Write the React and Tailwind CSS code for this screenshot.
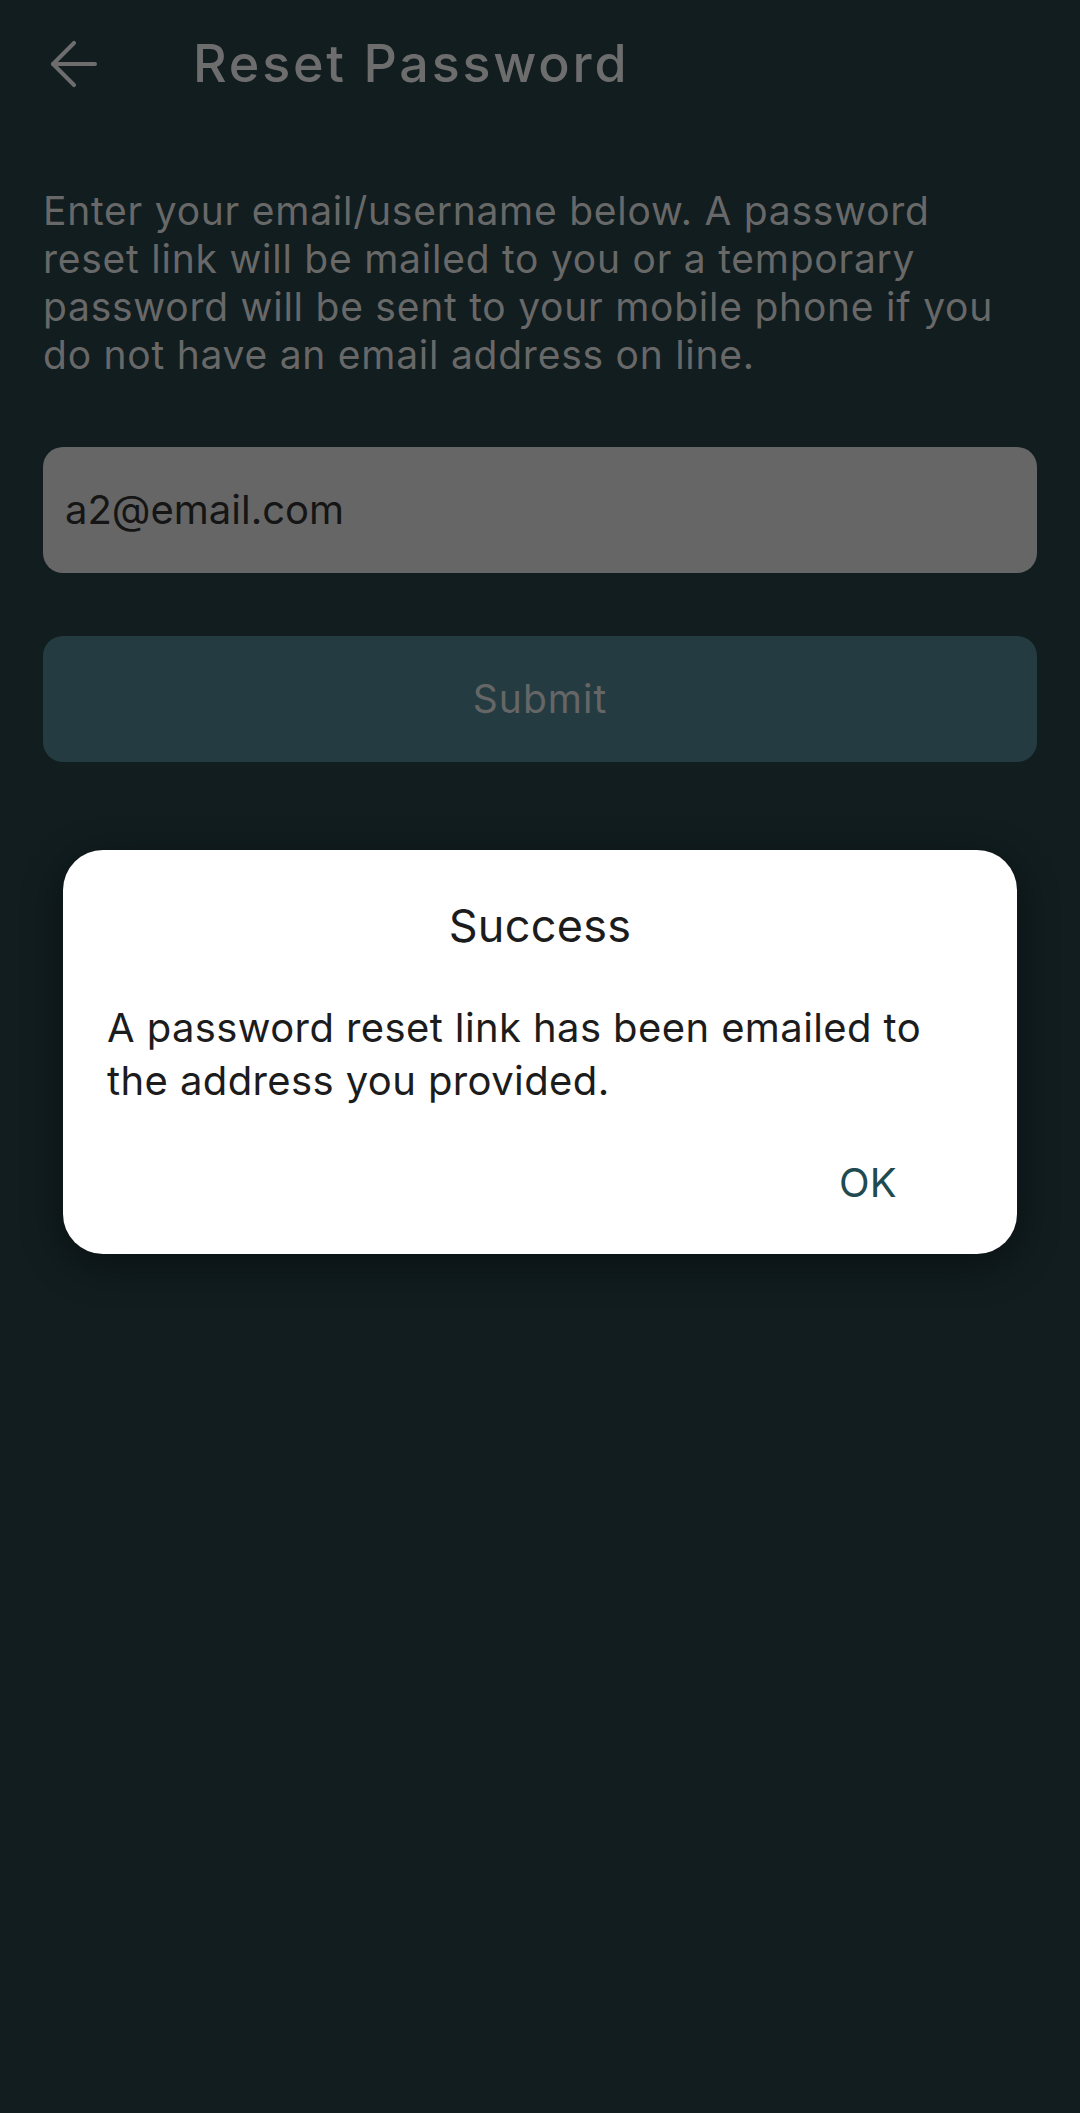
import { ArrowLeft } from 'lucide-react';

const font = { fontFamily: 'Inter, "Noto Sans", sans-serif' };

function SuccessDialog() {
  return (
    <div className="absolute left-[63px] top-[850px] w-[954px] h-[404px] bg-white rounded-[40px] shadow-[0_10px_40px_rgba(0,0,0,0.45)] flex flex-col">
      <h2 className="pt-[49px] text-center text-[45px] leading-[54px] text-[#1c1c1c] tracking-[0.3px]">Success</h2>
      <p className="mt-[48px] px-[44px] text-[40px] leading-[53px] text-[#1c1c1c] whitespace-nowrap tracking-[0.4px]">
        A password reset link has been emailed to<br />the address you provided.
      </p>
      <div className="mt-[52px] flex justify-end pr-[120px]">
        <button className="text-[40px] leading-[48px] text-[#1f4b50] tracking-[0.3px]">OK</button>
      </div>
    </div>
  );
}

export default function App() {
  return (
    <div className="relative min-h-[2113px] w-full bg-[#111d1f]" style={font}>
      {/* Header */}
      <div className="h-[128px] flex items-center pl-[38px]">
        <ArrowLeft className="w-[72px] h-[72px] text-[#6d6d6d]" strokeWidth={1.35} />
        <h1 className="ml-[83px] text-[52px] leading-none font-medium text-[#6d6d6d] tracking-[2.8px]">Reset Password</h1>
      </div>

      <div className="px-[43px]">
        <p className="mt-[59px] text-[39px] leading-[48px] text-[#686868] whitespace-nowrap tracking-[0.75px]">
          Enter your email/username below. A password<br />
          reset link will be mailed to you or a temporary<br />
          password will be sent to your mobile phone if you<br />
          do not have an email address on line.
        </p>

        <div className="mt-[68px] h-[126px] rounded-[20px] bg-[#666666] flex items-center px-[22px]">
          <span className="text-[40px] text-[#151515]">a2@email.com</span>
        </div>

        <button className="mt-[63px] w-full h-[126px] rounded-[20px] bg-[#243c41] flex items-center justify-center">
          <span className="text-[39px] text-[#666666] tracking-[1px]">Submit</span>
        </button>
      </div>

      <SuccessDialog />
    </div>
  );
}
